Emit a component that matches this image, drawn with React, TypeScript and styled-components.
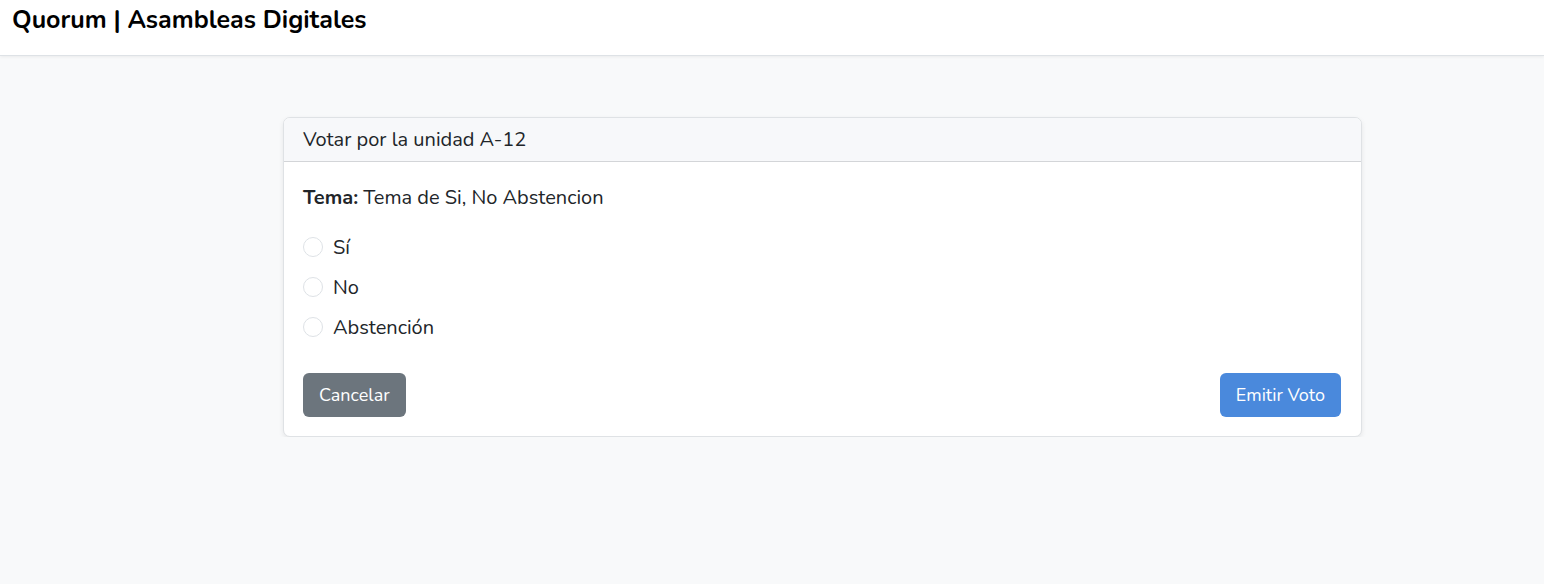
import styled, { createGlobalStyle } from "styled-components";

const GlobalStyle = createGlobalStyle`
    html, body {
        margin: 0;
        padding: 0;
        background: #f8f9fa;
        font-family: "Nunito", Lato, "Noto Sans", sans-serif;
        color: #212529;
    }
`

const options = ["Sí", "No", "Abstención"];

function App(){
    return(
        <>
            <GlobalStyle/>
            <Navbar>
                <Brand>Quorum | Asambleas Digitales</Brand>
            </Navbar>
            <Main>
                <Card>
                    <CardHeader>Votar por la unidad A-12</CardHeader>
                    <CardBody>
                        <Topic><strong>Tema:</strong> Tema de Si, No Abstencion</Topic>
                        <OptionList>
                            {options.map(opt => (
                                <OptionRow key={opt}>
                                    <Radio type="radio" name="voto" value={opt}/>
                                    <OptionLabel>{opt}</OptionLabel>
                                </OptionRow>
                            ))}
                        </OptionList>
                        <Actions>
                            <Button variant="secondary">Cancelar</Button>
                            <Button variant="primary">Emitir Voto</Button>
                        </Actions>
                    </CardBody>
                </Card>
            </Main>
        </>
    )
}

const Navbar = styled.header`
    height: 56px;
    background: #fff;
    border-bottom: 1px solid #dee2e6;
    box-shadow: 0 1px 3px rgba(0,0,0,0.06);
    display: flex;
    align-items: flex-start;
    padding: 0 12px;
    box-sizing: border-box;
`

const Brand = styled.h1`
    margin: 5px 0 0;
    font-size: 25px;
    font-weight: 700;
    color: #000;
    line-height: 30px;
`

const Main = styled.main`
    padding: 61px 182px 0 283px;
`

const Card = styled.div`
    background: #fff;
    border: 1px solid #dfe2e5;
    border-radius: 7px;
    box-shadow: 0 2px 5px rgba(0,0,0,0.08);
    overflow: hidden;
`

const CardHeader = styled.div`
    height: 43px;
    display: flex;
    align-items: center;
    padding: 0 19px;
    background: #f7f8fa;
    border-bottom: 1px solid #d3d5d8;
    font-size: 20px;
    color: #212529;
`

const CardBody = styled.div`
    padding: 21px 20px 19px 19px;
`

const Topic = styled.p`
    margin: 0 0 19px;
    font-size: 20px;
    line-height: 30px;

    strong{
        font-weight: 700;
    }
`

const OptionList = styled.div`
    display: flex;
    flex-direction: column;
    gap: 10px;
    margin-bottom: 31px;
`

const OptionRow = styled.label`
    display: flex;
    align-items: center;
    gap: 10px;
    height: 30px;
`

const Radio = styled.input`
    appearance: none;
    margin: 0;
    width: 20px;
    height: 20px;
    border: 1px solid #dee2e6;
    border-radius: 50%;
    background: #fff;
`

const OptionLabel = styled.span`
    font-size: 20px;
`

const Actions = styled.div`
    display: flex;
    justify-content: space-between;
`

interface IButton{
    variant: "primary" | "secondary";
}

const Button = styled.button<IButton>`
    height: 44px;
    padding: 0 16px;
    border: none;
    border-radius: 6px;
    font-family: inherit;
    font-size: 18px;
    color: #fff;
    background: ${props => props.variant === "primary" ? '#4a89dc' : '#6c757d'};
`

export default App;
